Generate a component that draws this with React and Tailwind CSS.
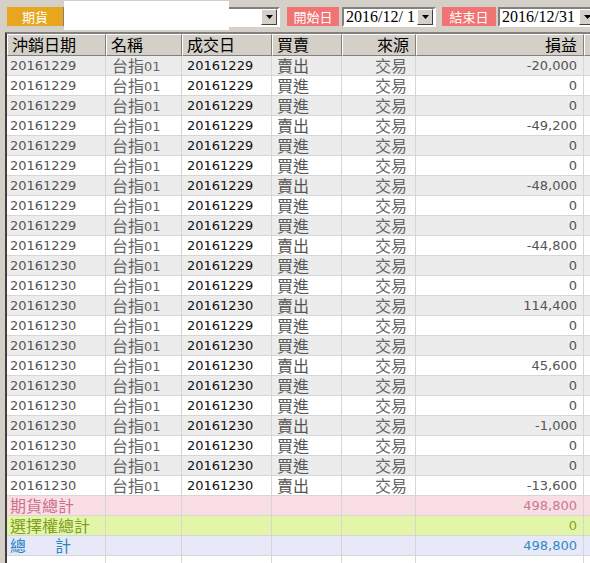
import React from "react";

const rows = [
  ["20161229", "20161229", "賣出", "-20,000"],
  ["20161229", "20161229", "買進", "0"],
  ["20161229", "20161229", "買進", "0"],
  ["20161229", "20161229", "賣出", "-49,200"],
  ["20161229", "20161229", "買進", "0"],
  ["20161229", "20161229", "買進", "0"],
  ["20161229", "20161229", "賣出", "-48,000"],
  ["20161229", "20161229", "買進", "0"],
  ["20161229", "20161229", "買進", "0"],
  ["20161229", "20161229", "賣出", "-44,800"],
  ["20161230", "20161229", "買進", "0"],
  ["20161230", "20161229", "買進", "0"],
  ["20161230", "20161230", "賣出", "114,400"],
  ["20161230", "20161229", "買進", "0"],
  ["20161230", "20161230", "買進", "0"],
  ["20161230", "20161230", "賣出", "45,600"],
  ["20161230", "20161230", "買進", "0"],
  ["20161230", "20161230", "買進", "0"],
  ["20161230", "20161230", "賣出", "-1,000"],
  ["20161230", "20161230", "買進", "0"],
  ["20161230", "20161230", "買進", "0"],
  ["20161230", "20161230", "賣出", "-13,600"],
];

const cols = "grid grid-cols-[99px_76px_90px_70px_74px_168px_40px]";
const cjk = { fontFamily: '"Noto Sans CJK TC", sans-serif' };
const latin = { fontFamily: '"DejaVu Sans", "Noto Sans CJK TC", sans-serif' };

const Arrow = () => (
  <div className="w-[16px] h-[16px] bg-[#d4d0c8] border border-t-white border-l-white border-r-[#404040] border-b-[#404040] flex items-center justify-center shrink-0">
    <svg width="7" height="4" viewBox="0 0 7 4">
      <path d="M0 0h7L3.5 4z" fill="#000" />
    </svg>
  </div>
);

const DateBox = ({ value, width }) => (
  <div className={`${width} h-[20px] bg-white border-2 border-t-[#808080] border-l-[#808080] border-r-white border-b-white flex items-center justify-between pl-[2px] pr-[1px] shrink-0`}>
    <span className="text-[16px] leading-[16px] text-black whitespace-pre" style={{ fontFamily: '"Liberation Serif", serif' }}>
      {value}
    </span>
    <Arrow />
  </div>
);

const Label = ({ children, className }) => (
  <div className={`h-[19px] flex items-center justify-center text-white text-[13px] leading-[17px] shrink-0 ${className}`} style={cjk}>
    {children}
  </div>
);

const HeadCell = ({ children, right }) => (
  <div
    className={`h-[22px] bg-[#d4d0c8] border border-t-white border-l-white border-r-[#808080] border-b-[#808080] text-[16px] leading-[19px] text-black px-[4px] whitespace-nowrap ${right ? "text-right pr-[6px]" : ""}`}
    style={cjk}
  >
    {children}
  </div>
);

const cell = "h-[20px] border-r border-b border-[#d6d6d6] leading-[19px] whitespace-nowrap";
const big = "text-[16px] leading-[19px]";

export default function App() {
  return (
    <div className="relative w-[590px] h-[563px] bg-[#d4d0c8] overflow-hidden" style={latin}>
      {/* toolbar */}
      <div className="h-[32px] flex items-start pt-[7px] pl-[7px]">
        <Label className="w-[56px] bg-[#e8a51e]">期貨</Label>
        <div className="w-[217px] h-[20px] bg-white border-2 border-t-[#808080] border-l-[#808080] border-r-white border-b-white flex items-center justify-end pr-[1px] shrink-0">
          <Arrow />
        </div>
        <Label className="w-[52px] ml-[7px] bg-[#f07474]">開始日</Label>
        <div className="ml-[3px]">
          <DateBox value="2016/12/ 1" width="w-[94px]" />
        </div>
        <Label className="w-[54px] ml-[6px] bg-[#f07474]">結束日</Label>
        <div className="ml-[2px]">
          <DateBox value="2016/12/31" width="w-[100px]" />
        </div>
      </div>
      <div className="absolute left-[64px] top-[1px] w-[165px] h-[29px] bg-white" />

      {/* grid */}
      <div className="ml-[5px] border-t-2 border-l-2 border-t-[#808080] border-l-[#404040] bg-white h-full">
        <div className={cols}>
          <HeadCell>沖銷日期</HeadCell>
          <HeadCell>名稱</HeadCell>
          <HeadCell>成交日</HeadCell>
          <HeadCell>買賣</HeadCell>
          <HeadCell right>來源</HeadCell>
          <HeadCell right>損益</HeadCell>
          <HeadCell />
        </div>

        {rows.map((r, i) => (
          <div key={i} className={`${cols} ${i % 2 === 0 ? "bg-[#ececec]" : "bg-white"}`}>
            <div className={`${cell} pl-[3px] text-[13px] text-[#555]`}>{r[0]}</div>
            <div className={`${cell} pl-[6px] text-[13px] text-[#666]`}>
              <span className={`${big} align-[-1px]`} style={cjk}>台指</span>01
            </div>
            <div className={`${cell} pl-[5px] text-[13px] text-[#111]`}>{r[1]}</div>
            <div className={`${cell} pl-[5px] ${big} text-[#555]`} style={cjk}>{r[2]}</div>
            <div className={`${cell} pr-[8px] text-right ${big} text-[#666]`} style={cjk}>交易</div>
            <div className={`${cell} pr-[6px] text-right text-[13px] text-[#555]`}>{r[3]}</div>
            <div className={cell} />
          </div>
        ))}

        {/* totals */}
        {[
          { label: <span>期貨總計</span>, value: "498,800", bg: "bg-[#f9dfe4]", fg: "text-[#cd6f8c]", vfg: "text-[#c9788f]" },
          { label: <span>選擇權總計</span>, value: "0", bg: "bg-[#e2f5a8]", fg: "text-[#7f9f1c]", vfg: "text-[#86a12a]" },
          {
            label: (
              <span>
                總<span className="ml-[29px]">計</span>
              </span>
            ),
            value: "498,800",
            bg: "bg-[#e7e9f8]",
            fg: "text-[#2a86c0]",
            vfg: "text-[#2f8ac4]",
          },
        ].map((t, i) => (
          <div key={i} className={`${cols} ${t.bg}`}>
            <div className={`${cell} pl-[3px] ${big} ${t.fg}`} style={cjk}>{t.label}</div>
            <div className={cell} />
            <div className={cell} />
            <div className={cell} />
            <div className={cell} />
            <div className={`${cell} pr-[6px] text-right text-[13px] ${t.vfg}`}>{t.value}</div>
            <div className={cell} />
          </div>
        ))}
        <div className={cols}>
          {[0, 1, 2, 3, 4, 5, 6].map((k) => (
            <div key={k} className={cell} />
          ))}
        </div>
      </div>
    </div>
  );
}
